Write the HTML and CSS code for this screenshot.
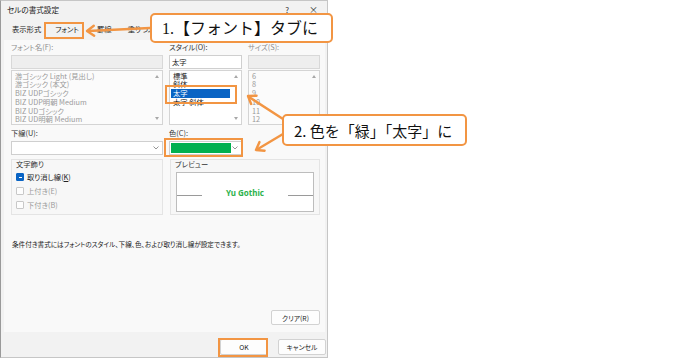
FILE: index.html
```html
<!DOCTYPE html>
<html lang="ja">
<head>
<meta charset="utf-8">
<title>セルの書式設定</title>
<link rel="stylesheet" href="styles.css">
</head>
<body>
<div class="dialog">
  <header class="titlebar">
    <span class="title">セルの書式設定</span>
    <span class="controls"><span class="help">?</span><span class="close">×</span></span>
  </header>
  <nav class="tabs">
    <span class="tab">表示形式</span>
    <span class="tab active">フォント</span>
    <span class="tab">罫線</span>
    <span class="tab">塗りつぶし</span>
  </nav>
  <main class="panel">
    <div class="grid">
      <div class="field disabled">
        <label class="lbl">フォント名(F):</label>
        <div class="input"></div>
        <div class="list">
          <div class="items">
            <div class="item">游ゴシック Light (見出し)</div>
            <div class="item">游ゴシック (本文)</div>
            <div class="item">BIZ UDPゴシック</div>
            <div class="item">BIZ UDP明朝 Medium</div>
            <div class="item">BIZ UDゴシック</div>
            <div class="item">BIZ UD明朝 Medium</div>
          </div>
          <div class="scroll"><span class="up"></span><span class="down"></span></div>
        </div>
      </div>
      <div class="field">
        <label class="lbl">スタイル(O):</label>
        <div class="input">太字</div>
        <div class="list">
          <div class="items">
            <div class="item">標準</div>
            <div class="item">斜体</div>
            <div class="item selected">太字</div>
            <div class="item">太字 斜体</div>
          </div>
          <div class="scroll"><span class="up"></span><span class="down"></span></div>
        </div>
      </div>
      <div class="field disabled">
        <label class="lbl">サイズ(S):</label>
        <div class="input"></div>
        <div class="list">
          <div class="items">
            <div class="item">6</div>
            <div class="item">8</div>
            <div class="item">9</div>
            <div class="item">10</div>
            <div class="item">11</div>
            <div class="item">12</div>
          </div>
          <div class="scroll"><span class="up"></span><span class="down"></span></div>
        </div>
      </div>
    </div>

    <div class="grid row2">
      <div class="field">
        <label class="lbl">下線(U):</label>
        <div class="select"><span class="val"></span><svg class="chev" viewBox="0 0 6 4" width="6" height="4"><polyline points="0.5,0.5 3,3 5.5,0.5"/></svg></div>
      </div>
      <div class="field">
        <label class="lbl">色(C):</label>
        <div class="select"><span class="swatch"></span><svg class="chev" viewBox="0 0 6 4" width="6" height="4"><polyline points="0.5,0.5 3,3 5.5,0.5"/></svg></div>
      </div>
    </div>

    <div class="grid row3">
      <section class="group effects">
        <div class="legend">文字飾り</div>
        <div class="check on"><span class="box"></span><span>取り消し線(<u>K</u>)</span></div>
        <div class="check off"><span class="box"></span><span>上付き(E)</span></div>
        <div class="check off"><span class="box"></span><span>下付き(B)</span></div>
      </section>
      <section class="group preview">
        <div class="legend">プレビュー</div>
        <div class="sample">
          <span class="rule"></span>
          <span class="sample-text">Yu Gothic</span>
          <span class="rule"></span>
        </div>
      </section>
    </div>

    <p class="note">条件付き書式にはフォントのスタイル、下線、色、および取り消し線が設定できます。</p>

    <div class="actions"><button class="btn">クリア(R)</button></div>
  </main>
  <footer class="footer">
    <button class="btn ok">OK</button>
    <button class="btn">キャンセル</button>
  </footer>
</div>

<div class="mark mark-tab"></div>
<div class="mark mark-style"></div>
<div class="mark mark-color"></div>
<div class="mark mark-ok"></div>

<svg class="arrows" width="689" height="362" viewBox="0 0 689 362">
  <g fill="none" stroke="#f29543" stroke-width="2.4" stroke-linecap="round" stroke-linejoin="round">
    <line x1="150" y1="28" x2="88" y2="31"/>
    <polyline points="93.8,25.7 87,31 94.2,35.7"/>
    <line x1="283" y1="119" x2="249" y2="97"/>
    <polyline points="256.6,95.7 248,96 251.1,104"/>
    <line x1="283" y1="134" x2="257" y2="149.5"/>
    <polyline points="259.5,142.1 256,150 264.6,150.7"/>
  </g>
</svg>

<div class="callout c1">1.【フォント】タブに</div>
<div class="callout c2">2. 色を「緑」「太字」に</div>
</body>
</html>
```

FILE: styles.css
```css
* { box-sizing: border-box; }

body {
  margin: 0;
  width: 689px;
  height: 362px;
  overflow: hidden;
  position: relative;
  background: #ffffff;
  font-family: "Noto Sans CJK JP", "Noto Sans", sans-serif;
  font-size: 7.3px;
  line-height: 9px;
  color: #222;
  font-feature-settings: "palt";
}

.dialog {
  width: 328px;
  height: 358px;
  border: 1px solid #c6c6c6;
  border-left-color: #9a9a9a;
  background: #f2f2f2;
  display: flex;
  flex-direction: column;
}

/* title bar */
.titlebar {
  height: 17px;
  display: flex;
  align-items: center;
  justify-content: space-between;
  padding: 0 9px 0 6px;
}
.title { font-size: 7.6px; color: #1a1a1a; }
.controls { display: flex; gap: 20px; color: #333; font-size: 8px; }
.close { font-size: 9px; }

/* tabs */
.tabs {
  height: 22px;
  display: flex;
  align-items: center;
  padding-left: 11px;
}
.tab { color: #222; }
.tab:nth-child(1) { margin-right: 14px; }
.tab:nth-child(2) { margin-right: 18px; }
.tab:nth-child(3) { margin-right: 16px; }

/* main panel */
.panel {
  flex: 1;
  margin: 0 2px 0 3px;
  background: #f9f9f9;
  padding: 3px 5px 7px 7px;
  display: flex;
  flex-direction: column;
}

.grid {
  display: grid;
  grid-template-columns: 152px 73px 72px;
  column-gap: 6px;
}

.field { display: flex; flex-direction: column; }
.lbl { height: 9px; line-height: 9px; color: #333; margin-bottom: 3px; }
.disabled .lbl { color: #8e8e8e; }

.input {
  height: 14px;
  border: 1px solid #cfcfcf;
  background: #fff;
  padding: 0 2px;
  line-height: 12px;
  color: #222;
}
.disabled .input { background: #eeeeee; border-color: #d8d8d8; }

.list {
  height: 55px;
  margin-top: 1px;
  border: 1px solid #d4d4d4;
  background: #fff;
  display: flex;
}
.disabled .list { background: #fbfbfb; }
.items { flex: 1; padding: 0.5px 0 0 1px; overflow: hidden; }
.item { height: 8.8px; line-height: 8.8px; padding-left: 2px; white-space: nowrap; }
.disabled .item { color: #9a9a9a; }
.item.selected { background: #0a64c4; color: #fff; }
.scroll {
  width: 11px;
  display: flex;
  flex-direction: column;
  justify-content: space-between;
  align-items: center;
  padding: 4px 0 4px;
}
.up, .down { width: 0; height: 0; border-left: 2.5px solid transparent; border-right: 2.5px solid transparent; }
.up { border-bottom: 3px solid #a8a8a8; }
.down { border-top: 3px solid #a8a8a8; }

/* underline / colour */
.row2 { margin-top: 4px; }
.select {
  height: 14px;
  border: 1px solid #cfcfcf;
  background: #fff;
  display: flex;
  align-items: center;
  padding: 1px 3px 1px 1px;
}
.val { flex: 1; }
.swatch { flex: 0 0 60px; height: 10px; background: #00b050; }
.chev { margin-left: auto; fill: none; stroke: #8a8a8a; stroke-width: 0.9; }

/* groups */
.row3 { margin-top: 4px; }
.group {
  height: 56px;
  border: 1px solid #e4e4e4;
  background: #f7f7f7;
}
.effects { padding: 0 0 0 4px; }
.preview { grid-column: 2 / 4; margin-left: 1px; padding: 0 5px 0 4px; }
.legend { height: 8px; line-height: 8px; color: #333; margin-top: 0; }

.check { display: flex; align-items: center; gap: 3px; height: 14px; }
.effects .legend + .check { margin-top: 2px; }
.check .box { width: 8px; height: 8px; border: 1px solid #c8c8c8; border-radius: 1px; background: #fdfdfd; position: relative; }
.check.on .box { background: #0a64c4; border-color: #0a64c4; }
.check.on .box::after { content: ""; position: absolute; left: 1.5px; right: 1.5px; top: 2.5px; height: 1px; background: #fff; }
.check.on { color: #222; }
.check.off { color: #9a9a9a; }
.check u { text-decoration: underline; }

.sample {
  margin-top: 4px;
  height: 40px;
  border: 1px solid #bdbdbd;
  background: #fff;
  display: flex;
  align-items: center;
  margin-left: 1px;
}
.rule { flex: 0 0 25px; height: 1px; background: #9a9a9a; align-self: center; margin-top: 6px; }
.sample-text {
  flex: 1;
  text-align: center;
  font-family: "Noto Sans", sans-serif;
  font-weight: 700;
  font-size: 8px;
  color: #2cb24c;
}

.note { margin: 25px 0 0 1px; font-size: 6.6px; line-height: 9px; color: #222; }

.actions { margin-top: auto; display: flex; justify-content: flex-end; }

.btn {
  font: inherit;
  font-size: 6.8px;
  line-height: 12px;
  height: 15px;
  width: 49px;
  border: 1px solid #d2d2d2;
  border-radius: 2px;
  background: #fdfdfd;
  color: #222;
  padding: 0;
}

/* footer */
.footer {
  height: 25px;
  display: flex;
  justify-content: flex-end;
  align-items: flex-start;
  gap: 10px;
  padding: 7px 1px 0 0;
}
.footer .btn { height: 16px; width: 48px; }

/* annotation layer */
.mark { position: absolute; border: 2px solid #f29543; }
.mark-tab { left: 44px; top: 22px; width: 40px; height: 17px; }
.mark-style { left: 165px; top: 85px; width: 72px; height: 19px; }
.mark-color { left: 164px; top: 138px; width: 79px; height: 19px; }
.mark-ok { left: 218px; top: 338px; width: 50px; height: 19px; }

.arrows { position: absolute; left: 0; top: 0; }

.callout {
  position: absolute;
  border: 2px solid #f29543;
  border-radius: 5px;
  background: #fff;
  color: #111;
  display: flex;
  align-items: center;
  white-space: nowrap;
  font-feature-settings: normal;
}
.c1 {
  left: 150px; top: 13px; width: 183px; height: 30px;
  padding-left: 10px;
  font-family: "Liberation Serif", "Noto Sans CJK JP", serif;
  font-size: 16px;
}
.c2 {
  left: 282px; top: 114px; width: 185px; height: 32px;
  padding-left: 10px;
  font-family: "Noto Sans CJK JP", sans-serif;
  font-size: 15px;
}
```
